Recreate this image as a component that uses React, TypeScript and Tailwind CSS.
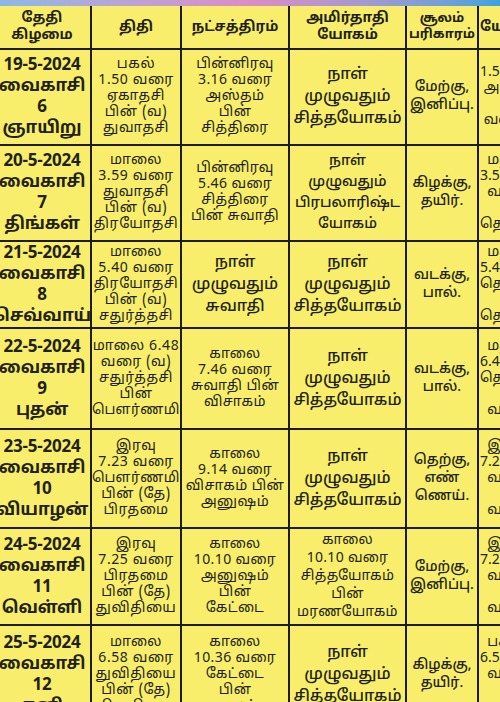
import React from 'react';

const font = { fontFamily: '"Noto Sans Tamil", "Lohit Tamil", "Noto Sans", "Liberation Sans", sans-serif' };

type Row = {
  date: string[];
  thithi: string[];
  star: string[];
  yogam: string[];
  soolam: string[];
  extra: string[];
  h: string;
  starBig?: boolean;
  yogamClass?: string;
};

const small = 'text-[14px] leading-[16px] tracking-[0.4px]';
const big = 'text-[16px] font-medium leading-[22px]';

const rows: Row[] = [
  {
    date: ['19-5-2024', 'வைகாசி', '6', 'ஞாயிறு'],
    thithi: ['பகல்', '1.50 வரை', 'ஏகாதசி', 'பின் (வ)', 'துவாதசி'],
    star: ['பின்னிரவு', '3.16 வரை', 'அஸ்தம்', 'பின்', 'சித்திரை'],
    yogam: ['நாள்', 'முழுவதும்', 'சித்தயோகம்'],
    soolam: ['மேற்கு,', 'இனிப்பு.'],
    extra: ['1.50 வரை', ' அமிர்த', '', ' வரை'],
    h: 'h-[96px]',
  },
  {
    date: ['20-5-2024', 'வைகாசி', '7', 'திங்கள்'],
    thithi: ['மாலை', '3.59 வரை', 'துவாதசி', 'பின் (வ)', 'திரயோதசி'],
    star: ['பின்னிரவு', '5.46 வரை', 'சித்திரை', 'பின் சுவாதி'],
    yogam: ['நாள்', 'முழுவதும்', 'பிரபலாரிஷ்ட', 'யோகம்'],
    soolam: ['கிழக்கு,', 'தயிர்.'],
    extra: ['  மதியம்', '3.59 வரை', '  வரை', '', 'தெற்கு'],
    h: 'h-[96px]',
    yogamClass: 'text-[14.5px] font-medium leading-[21px]',
  },
  {
    date: ['21-5-2024', 'வைகாசி', '8', 'செவ்வாய்'],
    thithi: ['மாலை', '5.40 வரை', 'திரயோதசி', 'பின் (வ)', 'சதுர்த்தசி'],
    star: ['நாள்', 'முழுவதும்', 'சுவாதி'],
    yogam: ['நாள்', 'முழுவதும்', 'சித்தயோகம்'],
    soolam: ['வடக்கு,', 'பால்.'],
    extra: ['  மதியம்', '5.40 வரை', 'தெற்கு', '', 'தெற்கு'],
    h: 'h-[87px]',
    starBig: true,
  },
  {
    date: ['22-5-2024', 'வைகாசி', '9', 'புதன்'],
    thithi: ['மாலை 6.48', 'வரை (வ)', 'சதுர்த்தசி', 'பின்', 'பௌர்ணமி'],
    star: ['காலை', '7.46 வரை', 'சுவாதி பின்', 'விசாகம்'],
    yogam: ['நாள்', 'முழுவதும்', 'சித்தயோகம்'],
    soolam: ['வடக்கு,', 'பால்.'],
    extra: ['  மதியம்', '6.48 வரை', 'தெற்கு', '', '  வடக்கு'],
    h: 'h-[101px]',
  },
  {
    date: ['23-5-2024', 'வைகாசி', '10', 'வியாழன்'],
    thithi: ['இரவு', '7.23 வரை', 'பௌர்ணமி', 'பின் (தே)', 'பிரதமை'],
    star: ['காலை', '9.14 வரை', 'விசாகம் பின்', 'அனுஷம்'],
    yogam: ['நாள்', 'முழுவதும்', 'சித்தயோகம்'],
    soolam: ['தெற்கு,', 'எண்', 'ணெய்.'],
    extra: ['  இரவு', '7.23 வரை', '  வடக்கு', '', '  வடக்கு'],
    h: 'h-[99px]',
  },
  {
    date: ['24-5-2024', 'வைகாசி', '11', 'வெள்ளி'],
    thithi: ['இரவு', '7.25 வரை', 'பிரதமை', 'பின் (தே)', 'துவிதியை'],
    star: ['காலை', '10.10 வரை', 'அனுஷம்', 'பின்', 'கேட்டை'],
    yogam: ['காலை', '10.10 வரை', 'சித்தயோகம்', 'பின்', 'மரணயோகம்'],
    soolam: ['மேற்கு,', 'இனிப்பு.'],
    extra: ['  இரவு', '7.25 வரை', '  வடக்கு', '', '  வடக்கு'],
    h: 'h-[97px]',
    yogamClass: 'text-[14px] leading-[18px] tracking-[0.3px]',
  },
  {
    date: ['25-5-2024', 'வைகாசி', '12', 'சனி'],
    thithi: ['மாலை', '6.58 வரை', 'துவிதியை', 'பின் (தே)', 'திருதியை'],
    star: ['காலை', '10.36 வரை', 'கேட்டை', 'பின்', 'மூலம்'],
    yogam: ['நாள்', 'முழுவதும்', 'சித்தயோகம்'],
    soolam: ['கிழக்கு,', 'தயிர்.'],
    extra: ['  பகல்', '6.58 வரை', '  வடக்கு', '', '  வடக்கு'],
    h: 'h-[100px]',
  },
];

const Lines = ({ lines, className }: { lines: string[]; className: string }) => (
  <div className={className}>
    {lines.map((l, i) => (
      <div key={i} className="whitespace-pre">
        {l || '\u00a0'}
      </div>
    ))}
  </div>
);

const cell = 'flex items-center justify-center border-r-2 border-b-2 border-[#1d1b12] overflow-hidden text-center';

export default function App() {
  return (
    <div className="w-[500px] h-[702px] overflow-hidden bg-[#f8ee6c] text-[#221f14]" style={font}>
      <div className="h-[6px] bg-gradient-to-r from-[#8ab8e6] via-[#dc8cc4] to-[#3aa2dc]" />
      <div className="-ml-[6px] w-[506px] overflow-hidden">
        <div className="w-[600px]">
          {/* header */}
          <div className="flex h-[44px]">
            <div className={`${cell} w-[98px]`}>
              <Lines lines={['தேதி', 'கிழமை']} className="text-[14px] font-bold leading-[17px]" />
            </div>
            <div className={`${cell} w-[90px]`}>
              <Lines lines={['திதி']} className="text-[14px] font-bold" />
            </div>
            <div className={`${cell} w-[108px]`}>
              <Lines lines={['நட்சத்திரம்']} className="text-[14px] font-bold" />
            </div>
            <div className={`${cell} w-[117px]`}>
              <Lines lines={['அமிர்தாதி', 'யோகம்']} className="text-[14px] font-bold leading-[17px]" />
            </div>
            <div className={`${cell} w-[72px]`}>
              <Lines lines={['சூலம்', 'பரிகாரம்']} className="text-[13px] font-bold leading-[16px]" />
            </div>
            <div className={`${cell} w-[100px] justify-start pl-[1px]`}>
              <Lines lines={['யோகம்']} className="text-[14px] font-bold" />
            </div>
          </div>
          {rows.map((r, i) => (
            <div key={i} className={`flex ${r.h}`}>
              <div className={`${cell} w-[98px]`}>
                <Lines lines={r.date} className="text-[17px] font-bold leading-[21px] tracking-[-0.2px]" />
              </div>
              <div className={`${cell} w-[90px]`}>
                <Lines lines={r.thithi} className="text-[14px] leading-[16px] tracking-[0.6px]" />
              </div>
              <div className={`${cell} w-[108px]`}>
                <Lines lines={r.star} className={r.starBig ? big : small} />
              </div>
              <div className={`${cell} w-[117px]`}>
                <Lines lines={r.yogam} className={r.yogamClass ?? big} />
              </div>
              <div className={`${cell} w-[72px]`}>
                <Lines lines={r.soolam} className="text-[14px] font-medium leading-[18px]" />
              </div>
              <div className={`${cell} w-[100px] justify-start pl-[1px]`}>
                <Lines lines={r.extra} className="text-[14px] leading-[16px] text-left" />
              </div>
            </div>
          ))}
        </div>
      </div>
    </div>
  );
}
